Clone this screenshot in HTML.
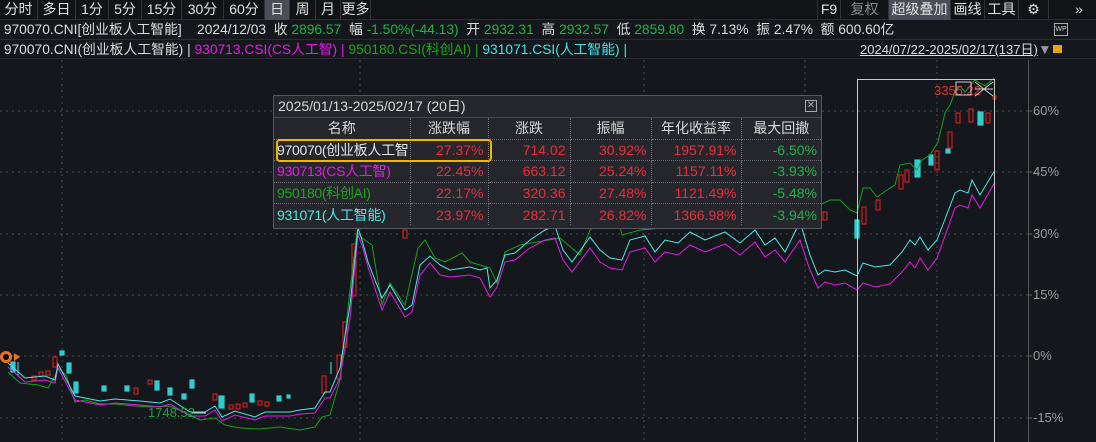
<!DOCTYPE html>
<html><head><meta charset="utf-8"><style>
*{margin:0;padding:0;box-sizing:border-box}
body{width:1096px;height:442px;background:#14171c;font-family:"Liberation Sans","Noto Sans CJK SC",sans-serif;color:#ddd;position:relative;overflow:hidden;font-size:14px}
.bar{position:absolute;left:0;top:0;width:1096px;height:20px;background:#111317;border-bottom:1px solid #2a2d33}
.bar span{position:absolute;top:0;height:20px;line-height:19px;color:#e0e0e0;font-size:14px;text-align:center;border-right:1px solid #2e3137;white-space:nowrap}
.r1{position:absolute;top:20px;left:0;width:1096px;height:20px;line-height:20px;white-space:nowrap;border-bottom:1px solid #2a2d33;font-size:13.8px}
.r2{position:absolute;top:40px;left:0;width:1096px;height:19px;line-height:19px;white-space:nowrap;border-bottom:1px solid #2a2d33;font-size:13.8px}
.g{color:#1fb34a}
.ax{position:absolute;left:1033px;color:#9a9a9a;font-size:13px}
.pop{position:absolute;left:273px;top:95px;width:549px;height:134px;background:#25272d;border:1px solid #555a62;overflow:hidden}
.pop .t{height:22px;line-height:21px;padding-left:4px;color:#d8d8d8;font-size:14px;border-bottom:1px solid #45484f;white-space:nowrap}
table{border-collapse:collapse;width:100%;font-size:14px;table-layout:fixed}
td{height:21.5px;line-height:20px;border-right:1px dotted #6a6d73;border-bottom:1px dotted #6a6d73;text-align:right;padding-right:4px;color:#ef2b38;white-space:nowrap;overflow:hidden}
td:last-child{border-right:none}
tr:last-child td{border-bottom:none}
th{font-weight:normal;color:#d8d8d8;height:21px;line-height:20px;border-right:1px dotted #6a6d73;border-bottom:1px dotted #6a6d73;white-space:nowrap;overflow:hidden}
th:last-child{border-right:none}
td.n{text-align:left;padding-left:3px;padding-right:0;letter-spacing:-0.3px}
</style></head><body>
<div class="bar">
<span style="left:0;width:38px">分时</span><span style="left:38px;width:38px">多日</span><span style="left:76px;width:33px">1分</span><span style="left:109px;width:33px">5分</span><span style="left:142px;width:40px">15分</span><span style="left:182px;width:42px">30分</span><span style="left:224px;width:41px">60分</span><span style="left:265px;width:25px;background:#4b4e57">日</span><span style="left:290px;width:26px">周</span><span style="left:316px;width:25px">月</span><span style="left:341px;width:30px">更多</span>
<span style="left:817px;width:24px;border-left:1px solid #2e3137">F9</span><span style="left:841px;width:48px;color:#888">复权</span><span style="left:889px;width:62px;background:#4b4e57">超级叠加</span><span style="left:951px;width:34px">画线</span><span style="left:985px;width:34px">工具</span><span style="left:1019px;width:30px">⚙</span><span style="left:1049px;width:47px;text-align:left;padding-left:26px;border:none">»</span>
</div>
<div class="r1">&nbsp;970070.CNI[创业板人工智能]&nbsp;&nbsp;&nbsp;&nbsp;2024/12/03&nbsp;&nbsp;收 <span class="g">2896.57</span>&nbsp;&nbsp;幅 <span class="g">-1.50%(-44.13)</span>&nbsp;&nbsp;开 <span class="g">2932.31</span>&nbsp;&nbsp;高 <span class="g">2932.57</span>&nbsp;&nbsp;低 <span class="g">2859.80</span>&nbsp;&nbsp;换 7.13%&nbsp;&nbsp;振 2.47%&nbsp;&nbsp;额 600.60亿
<span style="position:absolute;left:1054px;top:3px;width:14px;height:13px;border:1px solid #aaa;font-size:7px;line-height:11px;text-align:center;color:#ccc">WP</span></div>
<div class="r2">&nbsp;970070.CNI(创业板人工智能) | <span style="color:#e81ae8">930713.CSI(CS人工智)</span> <span style="color:#e81ae8">|</span> <span style="color:#1da51d">950180.CSI(科创AI)</span> <span style="color:#1da51d">|</span> <span style="color:#3ee6e6">931071.CSI(人工智能)</span> <span style="color:#3ee6e6">|</span>
<span style="position:absolute;left:860px;top:0;text-decoration:underline;color:#ddd;font-size:13px">2024/07/22-2025/02/17(137日)</span><span style="position:absolute;left:1038px;top:0;color:#999">▼</span><span style="position:absolute;left:1053px;top:5px;width:9px;height:8px;background:#e8a317"></span></div>
<svg width="1096" height="442" style="position:absolute;left:0;top:0">
<g stroke="#4a4d55" stroke-dasharray="2,4" stroke-width="1">
<line x1="0" y1="111" x2="1028" y2="111"/><line x1="0" y1="172" x2="1028" y2="172"/><line x1="0" y1="234" x2="1028" y2="234"/><line x1="0" y1="295" x2="1028" y2="295"/><line x1="0" y1="356" x2="1028" y2="356"/><line x1="0" y1="418" x2="1028" y2="418"/>
<line x1="62" y1="60" x2="62" y2="442"/><line x1="360" y1="60" x2="360" y2="442"/><line x1="644" y1="60" x2="644" y2="442"/><line x1="805" y1="60" x2="805" y2="442"/><line x1="937" y1="60" x2="937" y2="442"/>
</g>
<line x1="1028.5" y1="60" x2="1028.5" y2="442" stroke="#555"/>
<g stroke="#666" ><line x1="1028" y1="111" x2="1032" y2="111"/><line x1="1028" y1="172" x2="1032" y2="172"/><line x1="1028" y1="234" x2="1032" y2="234"/><line x1="1028" y1="295" x2="1032" y2="295"/><line x1="1028" y1="356" x2="1032" y2="356"/><line x1="1028" y1="418" x2="1032" y2="418"/></g>
<g stroke-width="1.2">
<g stroke="#3cc" fill="#3cc"><rect x="11" y="362" width="4" height="10"/><line x1="18" y1="362" x2="18" y2="376"/><rect x="60" y="351" width="4" height="4"/><rect x="67" y="363" width="4" height="10"/><rect x="74" y="382" width="4" height="11"/><rect x="102" y="386" width="4" height="5"/><rect x="125" y="386" width="4" height="5"/><rect x="155" y="381" width="4" height="9"/><rect x="168" y="388" width="4" height="7"/><rect x="182" y="394" width="4" height="5"/><rect x="190" y="380" width="4" height="8"/><rect x="219" y="396" width="5" height="12"/><rect x="250" y="394" width="4" height="8"/><rect x="277" y="396" width="4" height="5"/><rect x="287" y="395" width="3" height="3"/><line x1="331" y1="362" x2="331" y2="374"/><rect x="855" y="220" width="4" height="18"/><rect x="915" y="160" width="5" height="17"/><rect x="929" y="155" width="4" height="10"/><rect x="946" y="149" width="4" height="4"/><rect x="978" y="112" width="5" height="13"/></g>
<g stroke="#d01c1c" fill="none"><rect x="53" y="357" width="4" height="10"/><rect x="32" y="376" width="4" height="4"/><rect x="39" y="372" width="4" height="4"/><rect x="46" y="371" width="4" height="4"/><rect x="134" y="388" width="4" height="6"/><rect x="148" y="380" width="4" height="4"/><rect x="213" y="394" width="4" height="6"/><rect x="229" y="405" width="4" height="4"/><rect x="236" y="404" width="4" height="5"/><rect x="243" y="403" width="4" height="4"/><rect x="258" y="401" width="4" height="4"/><rect x="265" y="402" width="4" height="4"/><rect x="322" y="376" width="4" height="17"/><rect x="337" y="355" width="4" height="24"/><rect x="343" y="322" width="4" height="25"/><rect x="352" y="244" width="4" height="52"/><rect x="403" y="230" width="4" height="8"/><rect x="823" y="212" width="4" height="8"/><rect x="862" y="207" width="4" height="17"/><rect x="876" y="200" width="4" height="10"/><rect x="899" y="175" width="4" height="14"/><rect x="905" y="170" width="4" height="12"/><rect x="935" y="151" width="4" height="19"/><rect x="948" y="132" width="4" height="16"/><rect x="956" y="113" width="4" height="10"/><rect x="969" y="109" width="4" height="13"/><rect x="986" y="113" width="4" height="10"/><rect x="993" y="96" width="3" height="3"/></g>
</g>
<polyline fill="none" stroke="#1aa01a" stroke-width="1" points="8,372 20,383 38,385 48,388 55,376 58,368 66,375 75,402 85,400 100,404 115,404 135,406 150,407 170,406 190,415 200,420 215,418 225,425 240,428 260,429 280,427 300,430 315,427 322,417 330,415 340,380 350,290 357,232 362,238 372,245 382,305 390,283 405,305 418,248 425,240 435,258 445,262 462,253 470,262 490,268 497,283 505,252 520,245 560,238 580,255 590,230 600,220 616,210 622,235 640,230 700,225 760,215 780,210 800,205 812,200 820,205 830,200 840,200 850,210 857,213 863,188 870,188 877,197 887,190 895,185 900,165 910,163 917,170 922,160 930,155 938,142 945,113 950,105 955,92 960,86 965,92 975,80 985,86 994,78"/>
<polyline fill="none" stroke="#e81ae8" stroke-width="1" points="8,367 25,382 45,380 55,383 58,368 75,400 100,405 115,403 140,405 160,407 170,404 190,416 205,416 215,410 222,421 235,415 255,420 265,416 290,416 300,414 315,413 325,398 330,398 340,378 350,318 358,235 362,245 368,267 382,310 390,292 405,317 412,312 420,275 430,263 440,275 450,277 470,275 480,278 490,297 497,287 505,262 515,260 530,248 545,240 555,238 563,260 572,272 590,248 600,262 610,268 622,270 630,252 645,248 655,262 665,252 678,255 690,245 705,252 725,244 740,255 755,242 765,257 775,250 785,262 800,240 810,270 818,288 825,282 835,285 845,283 857,290 863,283 875,287 890,284 902,272 910,262 915,268 920,258 928,270 937,258 955,208 960,205 968,208 972,195 980,208 995,182"/>
<polyline fill="none" stroke="#4de8e8" stroke-width="1" points="8,363 25,378 45,376 55,380 58,364 75,396 100,401 115,399 140,401 160,403 170,399 190,412 205,412 215,406 222,417 235,411 255,417 265,412 290,412 300,410 315,408 325,392 330,392 340,368 350,305 358,228 362,240 368,262 382,298 390,285 405,310 412,305 420,265 430,256 440,265 450,270 470,267 480,270 487,268 490,288 497,280 505,255 515,253 530,240 545,230 555,226 563,250 572,262 590,237 600,250 610,258 622,260 630,240 645,236 655,252 665,240 678,243 690,232 705,240 725,232 740,243 755,230 765,245 775,238 785,252 800,222 810,255 818,275 825,270 835,272 845,270 857,276 863,263 875,267 890,265 902,252 910,240 915,245 920,237 928,250 937,240 955,193 960,190 968,193 972,180 980,195 995,170"/>
<rect x="857.5" y="79.5" width="137" height="370" fill="none" stroke="#c8c8c8"/>
<text x="934" y="95" fill="#e23030" font-size="13" font-family="Liberation Sans">3355.22</text>
<rect x="956" y="82" width="15" height="13" fill="none" stroke="#ccc"/>
<path d="M975 82 L993 96 M975 96 L993 82 M975 89 L993 89" stroke="#ccc"/>
<text x="148" y="417" fill="#1fa040" font-size="13" font-family="Liberation Sans">1748.52</text>
<line x1="192" y1="413" x2="206" y2="413" stroke="#ccc"/>
<circle cx="6" cy="357" r="6" fill="#f07020"/><circle cx="6" cy="357" r="3" fill="#000"/><path d="M14 353 L20 357 L14 361Z" fill="#f07020"/>
</svg>
<div class="ax" style="top:103px">60%</div><div class="ax" style="top:164px">45%</div><div class="ax" style="top:226px">30%</div><div class="ax" style="top:287px">15%</div><div class="ax" style="top:348px">0%</div><div class="ax" style="top:410px">-15%</div>
<div class="pop"><div class="t">2025/01/13-2025/02/17 (20日)<span style="position:absolute;right:4px;top:4px;width:12px;height:12px;border:1px solid #aaa;font-size:10px;line-height:10px;text-align:center;color:#aaa">✕</span></div>
<table><colgroup><col style="width:136px"><col style="width:78px"><col style="width:82px"><col style="width:81px"><col style="width:90px"><col></colgroup>
<tr><th>名称</th><th>涨跌幅</th><th>涨跌</th><th>振幅</th><th>年化收益率</th><th>最大回撤</th></tr>
<tr><td class="n" style="color:#e6e6e6">970070(创业板人工智</td><td>27.37%</td><td>714.02</td><td>30.92%</td><td>1957.91%</td><td style="color:#1fb34a">-6.50%</td></tr>
<tr><td class="n" style="color:#e81ae8">930713(CS人工智)</td><td>22.45%</td><td>663.12</td><td>25.24%</td><td>1157.11%</td><td style="color:#1fb34a">-3.93%</td></tr>
<tr><td class="n" style="color:#1da51d">950180(科创AI)</td><td>22.17%</td><td>320.36</td><td>27.48%</td><td>1121.49%</td><td style="color:#1fb34a">-5.48%</td></tr>
<tr><td class="n" style="color:#4de8e8">931071(人工智能)</td><td>23.97%</td><td>282.71</td><td>26.82%</td><td>1366.98%</td><td style="color:#1fb34a">-3.94%</td></tr></table>
<div style="position:absolute;left:2px;top:43px;width:216px;height:23px;border:2.5px solid #f5b400;border-radius:4px"></div>
</div>
</body></html>
